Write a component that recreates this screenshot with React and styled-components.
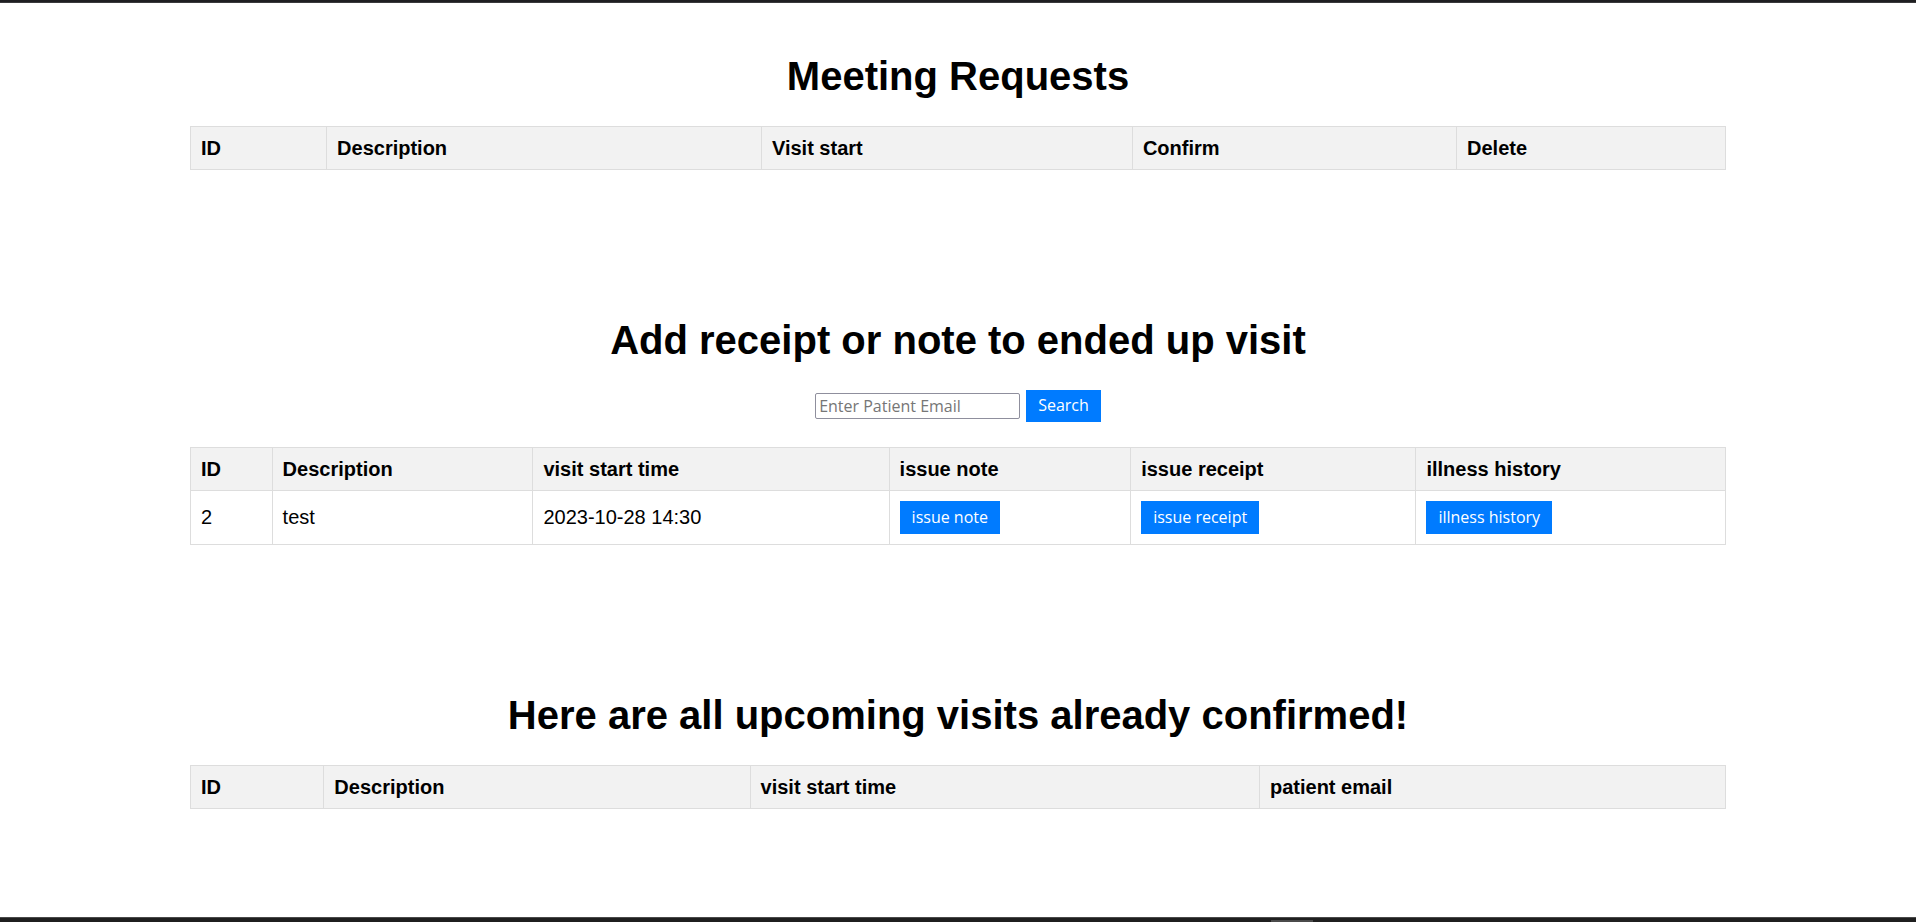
import styled, { createGlobalStyle } from 'styled-components';

const GlobalStyle = createGlobalStyle`
  html, body {
    margin: 0;
    padding: 0;
    background: #ffffff;
  }
  body {
    font-family: 'Liberation Sans', Arial, sans-serif;
    color: #000;
  }
`;

const Page = styled.div`
  display: flex;
  flex-direction: column;
  min-height: 100vh;
`;

const TopEdge = styled.div`
  height: 3px;
  background: #1f1f21;
  border-bottom: 1px solid #3a3a3c;
  box-sizing: border-box;
`;

const Main = styled.main`
  padding-top: 50px;
`;

const Section = styled.section`
  margin-bottom: 147px;

  &:last-child {
    margin-bottom: 0;
  }
`;

const Heading = styled.h1`
  margin: 0 0 27px;
  font-size: 40px;
  line-height: 46px;
  font-weight: 700;
  text-align: center;
`;

const SearchRow = styled.form`
  display: flex;
  justify-content: center;
  align-items: center;
  gap: 6px;
  margin-bottom: 25px;
`;

const SearchInput = styled.input`
  width: 205px;
  height: 26px;
  box-sizing: border-box;
  padding: 1px 3px;
  border: 1px solid #8f8f9d;
  border-radius: 2px;
  font-family: 'Open Sans', 'Noto Sans', sans-serif;
  font-size: 16px;

  &::placeholder {
    color: #767676;
  }
`;

const Button = styled.button`
  border: none;
  border-radius: 0;
  background: #007bff;
  color: #fff;
  font-family: 'Open Sans', 'Noto Sans', sans-serif;
  font-size: 16px;
  line-height: 21px;
  padding: ${(props) => (props.compact ? '6px 12px' : '5px 12px 6px')};
  cursor: pointer;
  vertical-align: top;
`;

const Table = styled.table`
  width: 1536px;
  margin: 0 auto;
  border-collapse: collapse;
  font-size: 20px;
`;

const Th = styled.th`
  background: #f2f2f2;
  border: 1px solid #ddd;
  padding: 10px;
  text-align: left;
  font-weight: 700;
  line-height: 22px;
`;

const Td = styled.td`
  border: 1px solid #ddd;
  padding: 10px;
  text-align: left;
  line-height: 33px;
`;

const BottomEdge = styled.div`
  margin-top: auto;
  height: 5px;
  background: #1f1f1f;
  border-top: 1px solid #4a4a4a;
  box-sizing: border-box;
  display: flex;
  align-items: flex-end;
  padding-left: 1271px;
`;

const Thumb = styled.div`
  width: 42px;
  height: 2px;
  background: #4b4b4b;
`;

const visits = [
  { id: 2, description: 'test', start: '2023-10-28 14:30' },
];

const App = () => {
  return (
    <Page>
      <GlobalStyle />
      <TopEdge />
      <Main>
        <Section>
          <Heading>Meeting Requests</Heading>
          <Table>
            <thead>
              <tr>
                <Th>ID</Th>
                <Th>Description</Th>
                <Th>Visit start</Th>
                <Th>Confirm</Th>
                <Th>Delete</Th>
              </tr>
            </thead>
            <tbody />
          </Table>
        </Section>

        <Section>
          <Heading>Add receipt or note to ended up visit</Heading>
          <SearchRow onSubmit={(e) => e.preventDefault()}>
            <SearchInput type="email" placeholder="Enter Patient Email" />
            <Button type="submit">Search</Button>
          </SearchRow>
          <Table>
            <thead>
              <tr>
                <Th>ID</Th>
                <Th>Description</Th>
                <Th>visit start time</Th>
                <Th>issue note</Th>
                <Th>issue receipt</Th>
                <Th>illness history</Th>
              </tr>
            </thead>
            <tbody>
              {visits.map((v) => (
                <tr key={v.id}>
                  <Td>{v.id}</Td>
                  <Td>{v.description}</Td>
                  <Td>{v.start}</Td>
                  <Td><Button compact>issue note</Button></Td>
                  <Td><Button compact>issue receipt</Button></Td>
                  <Td><Button compact>illness history</Button></Td>
                </tr>
              ))}
            </tbody>
          </Table>
        </Section>

        <Section>
          <Heading>Here are all upcoming visits already confirmed!</Heading>
          <Table>
            <thead>
              <tr>
                <Th>ID</Th>
                <Th>Description</Th>
                <Th>visit start time</Th>
                <Th>patient email</Th>
              </tr>
            </thead>
            <tbody />
          </Table>
        </Section>
      </Main>
      <BottomEdge>
        <Thumb />
      </BottomEdge>
    </Page>
  );
};

export default App;
